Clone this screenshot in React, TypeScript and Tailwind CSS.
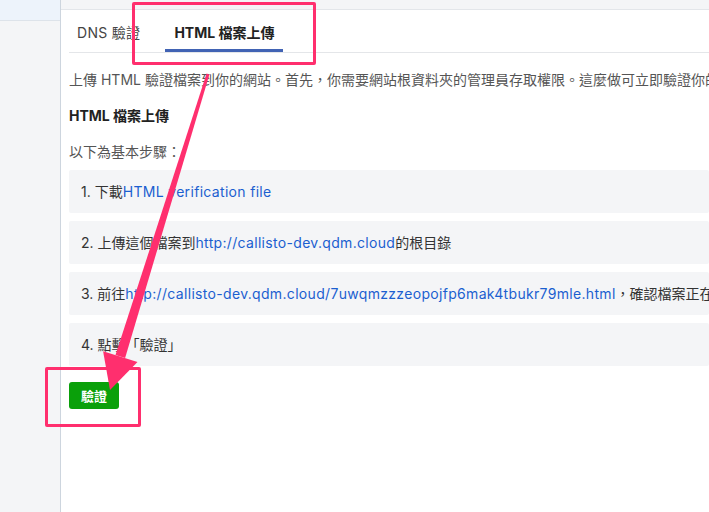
import React from "react";

const L = ({ children }: { children: React.ReactNode }) => (
  <span className="text-[#1b5fd0] tracking-[0.32px]">{children}</span>
);

export default function App() {
  const steps: React.ReactNode[] = [
    <>
      1. 下載<L>HTML verification file</L>
    </>,
    <>
      2. 上傳這個檔案到<L>http://callisto-dev.qdm.cloud</L>的根目錄
    </>,
    <>
      3. 前往<L>http://callisto-dev.qdm.cloud/7uwqmzzzeopojfp6mak4tbukr79mle.html</L>，確認檔案正在
    </>,
    <>4. 點擊「驗證」</>,
  ];

  return (
    <div className="relative w-[709px] h-[512px] overflow-hidden bg-white flex font-['Inter','Noto_Sans_CJK_TC',sans-serif]">
      <aside className="w-[61px] shrink-0 bg-[#f4f5f7] border-r border-[#cdd5de]">
        <div className="h-[21px] bg-[#edf3fb] border-b border-[#dde3ea]" />
      </aside>
      <main className="flex-1 min-w-0 overflow-hidden">
        <div className="h-[10px] bg-[#f4f5f7] border-b border-[#e3e6ea]" />
        <div className="pl-[8px]">
          <div className="flex h-[43px] border-b border-[#e4e6e9] text-[14px]">
            <div className="px-2 pt-[6px] flex items-center border-b-[3px] border-transparent text-[#444] whitespace-nowrap tracking-[0.3px]">
              DNS 驗證
            </div>
            <div className="ml-[17px] px-[9px] pt-[6px] flex items-center border-b-[3px] border-[#4163b4] font-bold text-[#222] whitespace-nowrap">
              HTML 檔案上傳
            </div>
          </div>
          <div className="text-[14px] leading-[20px]">
            <p className="mt-[17px] text-[#555] whitespace-nowrap">
              上傳 HTML 驗證檔案到你的網站。首先，你需要網站根資料夾的管理員存取權限。這麼做可立即驗證你的
            </p>
            <p className="mt-[16px] font-bold text-[#222] whitespace-nowrap">HTML 檔案上傳</p>
            <p className="mt-[16px] text-[#555] whitespace-nowrap">以下為基本步驟：</p>
            <div className="mt-[8px] flex flex-col gap-[8px]">
              {steps.map((s, i) => (
                <div
                  key={i}
                  className="h-[43px] flex items-center pl-[12px] bg-[#f4f5f7] rounded-[2px] text-[#333] whitespace-nowrap"
                >
                  {s}
                </div>
              ))}
            </div>
            <button className="mt-[16px] w-[50px] h-[27px] rounded-[3px] bg-[#0aa00a] text-white text-[13px] font-bold flex items-center justify-center">
              驗證
            </button>
          </div>
        </div>
      </main>

      <div className="absolute left-[132px] top-[2px] w-[184px] h-[63px] border-[3px] border-[#ff2f6e] rounded-[2px] pointer-events-none" />
      <div className="absolute left-[45px] top-[367px] w-[96px] h-[60px] border-[3px] border-[#ff2f6e] rounded-[2px] pointer-events-none" />
      <svg className="absolute left-0 top-0 pointer-events-none" width="709" height="512" viewBox="0 0 709 512">
        <polygon
          points="209.4,74.4 206.6,73.6 115.5,355.1 125.1,358.1"
          fill="#ff2f6e"
        />
        <polygon points="110,390 103.1,351.3 137.5,361.9" fill="#ff2f6e" />
      </svg>
    </div>
  );
}
